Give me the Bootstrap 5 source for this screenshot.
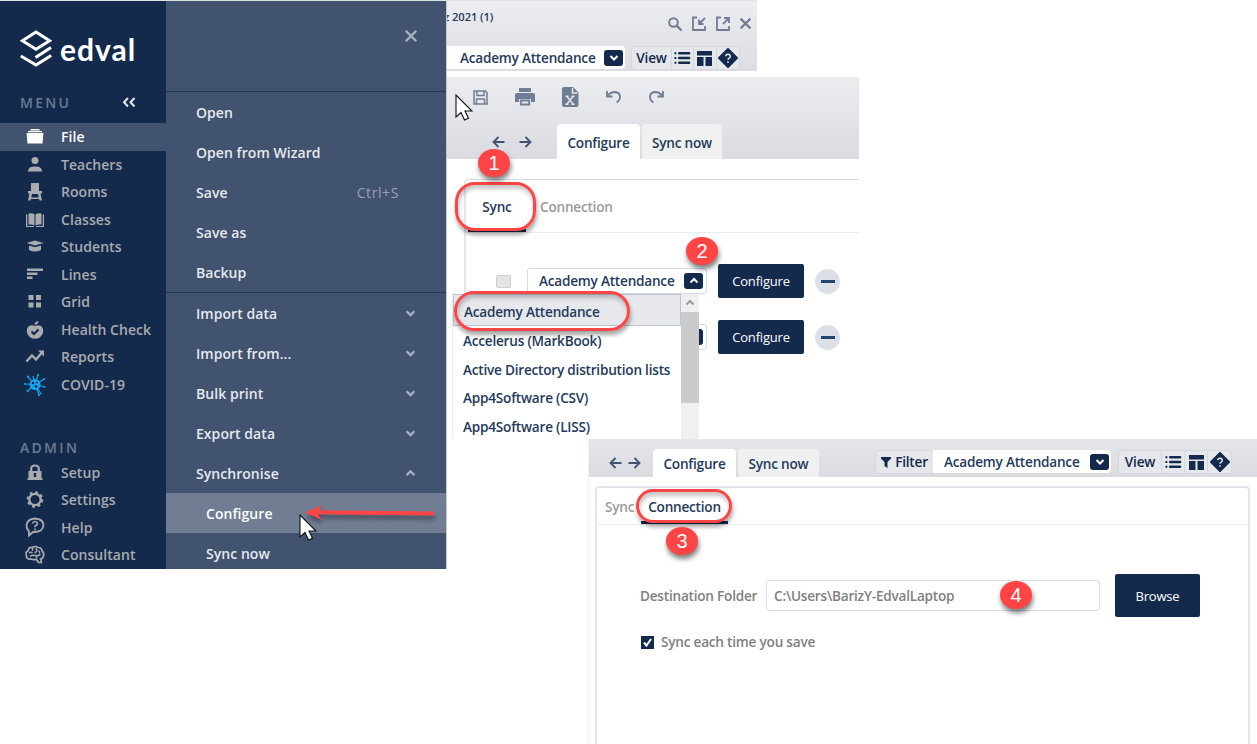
<!DOCTYPE html>
<html lang="en">
<head>
  <meta charset="UTF-8" />
  <meta name="viewport" content="width=device-width, initial-scale=1.0" />
  <title>Edval | Synchronise</title>
  <link href="https://cdn.jsdelivr.net/npm/bootstrap@5.3.0/dist/css/bootstrap.min.css" rel="stylesheet" />
  <style>
    :root { --navy: #132a4d; --ink: #243a5c; --slate: #41536e; --red: #fe4444; --line: #e4e6eb; }
    body {
      width: 1257px;
      height: 744px;
      overflow: hidden;
      background: #fff;
      color: var(--ink);
      font: 600 13.6px/20px "Open Sans", "Noto Sans", sans-serif;
      letter-spacing: -.22px;
    }
    svg { display: block; fill: currentColor; flex: none; }
    .guide { display: grid; grid-template: 439px 305px / 447px 141px 271px 398px; }
    .win-file { grid-area: 1 / 1 / 3 / 2; z-index: 1; height: 569px; width: 447px; border-top: 1px solid #dde3de; border-right: 1px solid #c9c9c9; font-size: 14px; letter-spacing: .05px; }
    .win-sync { grid-area: 1 / 2 / 2 / 4; }
    .win-conn { grid-area: 2 / 3 / 3 / 5; border-left: 1px solid #f0f0f3; }

    /* left menu */
    .side { width: 166px; background: var(--navy); color: #a9abae; }
    .brand-row { height: 92px; padding: 4px 0 0 20px; color: #fff; }
    .brand-name { font: 700 30px/32px "Lato", sans-serif; letter-spacing: 1px; margin-left: 8px; }
    .side-title { color: #6c7b92; letter-spacing: 2.3px; padding-left: 20px; height: 30px; }
    .side-title svg { margin-right: 29px; }
    .side-title.admin { height: 21px; margin-top: 40px; }
    .side a { height: 27.5px; padding: 1px 0 0 24px; color: inherit; text-decoration: none; display: flex; align-items: center; }
    .side .admin ~ a { padding-top: 0; }
    .side a svg { width: 22px; height: 22px; margin-right: 15px; }
    .side a.on { background: var(--slate); color: #fff; }
    .virus { color: #17a5ea; }

    .sub { width: 280px; background: var(--slate); color: #e6e9ee; }
    .sub-head { height: 91px; border-bottom: 1px solid #1d3558; padding: 28px 28px 0 0; color: #a9b2c0; }
    .sub-list > div { height: 40px; padding: 1px 30px 0 30px; display: flex; align-items: center; justify-content: space-between; }
    .sub-list > div svg { color: #a9b2c0; width: 11px; height: 9px; }
    .sub-list.first { height: 201px; padding-top: 1px; border-bottom: 1px solid #1d3558; }
    .sub-list.first > div { padding-top: 0; }
    .sub-list > .inner { padding-left: 40px; }
    .sub-list > .inner:last-child { height: 36px; padding-top: 5px; }
    .sub-list > .on { background: #707d93; color: #fff; }
    .keys { color: #98a3b3; font-weight: 500; padding-right: 17px; letter-spacing: .6px; }

    /* window bars */
    .bar-a { width: 310px; height: 71px; background: linear-gradient(#ecedf1, #dcdde2); border-top: 1px solid #dde3de; }
    .bar-b { height: 82px; margin-top: 6px; background: linear-gradient(#ecedf1, #dadbe1); }
    .bar-c { height: 38px; background: linear-gradient(#e5e6ea, #dadbe1); padding-left: 20px; }
    .gray { color: #6f7e94; }
    .title-row { height: 45px; }
    .doc-title { font-size: 11.2px; line-height: 16px; padding-top: 8px; margin-left: -3px; letter-spacing: -.1px; }
    .title-row .gray { gap: 8px; margin-right: 5px; }
    .pick { background: #fff; width: 178px; height: 23px; border-radius: 0 4px 4px 0; padding: 0 2px 0 13px; }
    .bar-c .pick { padding-left: 11px; margin-bottom: 4px; }
    .drop { width: 19px; height: 16px; border-radius: 3px; background: var(--navy); color: #fff; display: grid; place-items: center; }
    .drop svg { width: 10px; height: 8px; }
    .tools { height: 24px; border: 1px solid #d3d7df; border-radius: 4px; background: #e6e7eb; color: var(--navy); }
    .bar-a .tools { margin-left: 6px; }
    .bar-c .tools { margin: 0 0 3px 7px; }
    .bar-c .tools.filter { width: 58px; margin-left: 56px; border-right: 0; border-radius: 4px 0 0 4px; }
    .tools > * { width: 22.3px; height: 22px; display: grid; place-items: center; border-right: 1px solid #d3d7df; }
    .tools > .word { width: 40px; }
    .bar-c .tools > * { width: 23px; }
    .bar-c .tools > .word { width: 43px; }
    .tools > :last-child { border: 0; }
    .quick { height: 40px; padding-left: 26px; gap: 27px; }
    .arrows { color: #41536e; gap: 14px; width: 110px; padding-left: 45px; }
    .bar-c .arrows { gap: 6px; width: 44px; padding: 0 0 8px; }
    .tab { width: 80px; height: 35px; padding-top: 2px; margin-left: 2px; border-radius: 4px 4px 0 0; background: #eff1f1; display: grid; place-items: center; }
    .tab.on { width: 83px; margin-left: 0; background: #fff; }
    .bar-c .tab { width: 81px; height: 28px; }
    .bar-c .tab.on { width: 83px; }

    .sheet { border: 2px solid var(--line); border-bottom: 0; border-radius: 4px 4px 0 0; }
    .sheet-tabs { border-bottom: 1px solid #ececf0; color: #9b9b9b; }
    .sheet-tabs > * { display: flex; align-items: center; }
    .sheet-tabs .on { justify-content: center; color: var(--ink); border-bottom: 3px solid var(--navy); padding-top: 4px; }
    .sheet-list { margin: 20px 0 0 17px; height: 259px; border-width: 1px 0 0 2px; border-radius: 4px 0 0 0; border-top-color: #d9dbe2; }
    .sheet-list .sheet-tabs { height: 53px; }
    .sheet-list .on { width: 58px; height: 52px; margin-left: 2px; }
    .sheet-list .off { padding: 2px 0 0 14px; }
    .sheet-dest { margin: 9px 7px 0 6px; height: 258px; }
    .sheet-dest .sheet-tabs { height: 37px; }
    .sheet-dest .on { width: 87px; height: 36px; }
    .sheet-dest .off { width: 44px; padding: 2px 0 0 8px; }

    .btn-navy, .btn-navy:hover { width: 86px; height: 34px; padding: 2px 0 0; margin-left: 11px; border: 0; border-radius: 2px; background: var(--navy); color: #fff; font-size: 13px; font-weight: 500; letter-spacing: -.2px; }
    .sync-row { padding: 31px 0 0 30px; }
    .sync-row.second { padding: 22px 0 0 61px; }
    .combo { width: 180px; height: 26px; padding: 0 3px 0 11px; border: 1px solid #d5d9e2; border-radius: 3px; }
    .offbox + .combo { margin-left: 16px; }
    .minus { width: 25px; height: 25px; margin-left: 11px; border-radius: 50%; background: #dcdfe6; display: grid; place-items: center; }
    .minus i { width: 14px; height: 3px; background: #23446f; }
    .offbox { width: 15px; height: 13px; border: 1px solid #cfcfcf; background: #e4e4e4; border-radius: 2px; }

    .menu-list { left: 452px; top: 294px; width: 247px; height: 145px; background: #fff; border-left: 1px solid #eee; }
    .menu-list .opt { height: 28.6px; padding-left: 10px; display: flex; align-items: center; }
    .menu-list .opt.on { height: 32px; padding-top: 3px; background: #e6e8ec; border: 1px solid #b9c4d0; margin-bottom: 1px; }
    .scroll-col { width: 18px; background: #f0f0f0; }
    .scroll-col svg { color: #999; margin: 5px 4px; }
    .scroll-col i { display: block; height: 91px; background: #cbcbcb; }

    .dest-row { padding: 49px 0 0 43px; color: #808080; }
    .dest-row label { width: 126px; }
    .path-box { width: 334px; height: 31px; border: 1px solid #d9dde5; border-radius: 3px; padding-left: 7px; }
    .dest-row .btn-navy { width: 85px; height: 43px; margin-left: 15px; }
    .auto-row { padding: 15px 0 0 44px; gap: 7px; color: #808080; }

    /* call-outs */
    .ring { position: absolute; border: 3px solid var(--red); border-radius: 20px; box-shadow: 1px 4px 4px rgba(0,0,0,.35), inset 1px 4px 4px rgba(0,0,0,.22); z-index: 2; }
    .ring-1 { left: 455px; top: 182px; width: 81px; height: 49px; }
    .ring-2 { left: 454px; top: 291px; width: 176px; height: 40px; }
    .ring-3 { left: 636px; top: 489px; width: 96px; height: 34px; }
    .num { position: absolute; width: 32px; height: 28px; border-radius: 50%; background: var(--red); color: #fff; box-shadow: 1px 4px 5px rgba(0,0,0,.5); font: 20px/28px "Liberation Sans", sans-serif; text-align: center; z-index: 2; }
    .num-1 { left: 478px; top: 149px; }
    .num-2 { left: 686px; top: 237px; }
    .num-3 { left: 666px; top: 527px; }
    .num-4 { left: 1000px; top: 581px; }
    .over { position: absolute; overflow: visible; z-index: 3; }
    .arrow-red { left: 305px; top: 503px; filter: drop-shadow(1px 4px 2px rgba(0,0,0,.4)); }
    .ptr-1 { left: 299px; top: 514px; }
    .ptr-2 { left: 455px; top: 94px; }
  </style>
</head>
<body>
  <svg width="0" height="0" class="position-absolute">
    <symbol id="chev" viewBox="0 0 10 8"><path d="M1.500 2 5 5.500 8.500 2" fill="none" stroke="currentColor" stroke-width="2"/></symbol>
    <symbol id="chev-up" viewBox="0 0 10 8"><path d="M1.500 5.500 5 2 8.500 5.500" fill="none" stroke="currentColor" stroke-width="2"/></symbol>
    <symbol id="cross" viewBox="0 0 12 12"><path d="M1.500 1.500 10.500 10.500M10.500 1.500 1.500 10.500" fill="none" stroke="currentColor" stroke-width="2"/></symbol>
    <symbol id="list" viewBox="0 0 18 14"><path d="M5.500 2H16M5.500 7H16M5.500 12H16" stroke="currentColor" stroke-width="2.600" stroke-linecap="round"/><path d="M.5 1h2v2h-2zM.5 6h2v2h-2zM.5 11h2v2h-2z"/></symbol>
    <symbol id="table" viewBox="0 0 15 15"><path d="M0 0h15v4.500H0zM0 6h6.500v9H0zM8.500 6H15v9H8.500z"/></symbol>
    <symbol id="ask" viewBox="0 0 20 20"><path d="M10 1 19 10 10 19 1 10z" stroke="currentColor" stroke-width="2" stroke-linejoin="round"/><path d="M7.700 8.200a2.300 2.100 0 1 1 3.500 1.900q-1.200.6-1.200 1.700M10 13.200v1.600" fill="none" stroke="#e6e7eb" stroke-width="1.500"/></symbol>
    <symbol id="left" viewBox="0 0 13 12"><path d="M12.500 6H1.500M6.500 1 1.500 6l5 5" fill="none" stroke="currentColor" stroke-width="1.800"/></symbol>
    <symbol id="right" viewBox="0 0 13 12"><path d="M.5 6h11M6.500 1l5 5-5 5" fill="none" stroke="currentColor" stroke-width="1.800"/></symbol>
    <symbol id="pointer" viewBox="0 0 18 27"><path d="M1 1v22l5-4.500 3.500 7.500 4-1.800L10 17h7z" fill="#fff" stroke="#111" stroke-width="1.100"/></symbol>
  </svg>

  <div class="guide position-relative">
    <!-- File menu -->
    <section class="win-file d-flex">
      <nav class="side">
        <div class="brand-row d-flex align-items-center">
          <svg width="32" height="38" viewBox="0 0 32 38"><path d="M16 2 29.600 10.700 16 19.300 2.400 10.700zM31 17.500 15.500 27.500M.8 26 16 35 31.200 25.500" fill="none" stroke="#fff" stroke-width="3"/></svg>
          <span class="brand-name">edval</span>
        </div>
        <div class="side-title d-flex"><span>MENU</span>
          <svg class="ms-auto" width="15" height="20" viewBox="0 0 15 20"><path d="M6 5 2 9.200 6 13.500M12.500 5l-4 4.200 4 4.300" fill="none" stroke="#e4e7ec" stroke-width="2"/></svg>
        </div>
        <a class="on" href="#"><svg viewBox="0 0 22 22"><path d="M7 3h8l1 1.500H6zM4 5h14v1.200H4zM2.500 7h17L18.500 17.500h-15z"/></svg>File</a>
        <a href="#"><svg viewBox="0 0 22 22"><circle cx="11" cy="6.500" r="3.500"/><path d="M4 17.500c0-4 3-5 7-5s7 1 7 5z"/></svg>Teachers</a>
        <a href="#"><svg viewBox="0 0 22 22"><path d="M7 2h8v8h3v2.500h-1.500l1.500 7h-2.500L15 18H7l-.5 1.500H4l1.500-7H4V10h3zM8 13l-.7 3.500h7.400L14 13z"/></svg>Rooms</a>
        <a href="#"><svg viewBox="0 0 22 22"><path d="M4.500 4.500q4-1 6 1v11q-2-1.500-6-1zM11.500 5.500q2-2 6-1v11q-4-.5-6 1zM2 5.500h1.300V17H10v1H2zM20 5.500h-1.300V17H12v1h8z"/></svg>Classes</a>
        <a href="#"><svg viewBox="0 0 22 22"><path d="M2.500 7 11 4.500 19.500 7 11 9.500zM5 9.500l6 1.800 6-1.800v4.500q-6 3-12 0z"/></svg>Students</a>
        <a href="#"><svg viewBox="0 0 22 22"><path d="M3 4.500h16v2.400H3zM3 8.500h10.500v2.400H3zM3 12.500h5.500v2.400H3z"/></svg>Lines</a>
        <a href="#"><svg viewBox="0 0 22 22"><path d="M4.500 4h5v5h-5zM12 4h5v5h-5zM4.500 11.500h5v5h-5zM12 11.500h5v5h-5z"/></svg>Grid</a>
        <a href="#"><svg viewBox="0 0 22 22"><path d="M10.500 6Q10.500 2.500 14.500 2 14.500 5.500 10.500 6zM11 7q3-1.500 6 0 3.500 3 1.500 8-3 5.500-7.500 4.500-4.500 1-7.500-4.500Q1.500 10 5 7q3-1.500 6 0z"/><path d="m7.500 12.500 2.500 2.500 4.500-4.500" fill="none" stroke="#132a4d" stroke-width="2"/></svg>Health Check</a>
        <a href="#"><svg viewBox="0 0 22 22"><path d="m2.500 15.500 5.500-6 4 4 6-7" fill="none" stroke="currentColor" stroke-width="2.400"/><path d="M14 4.500h6v6z"/></svg>Reports</a>
        <a href="#"><svg class="virus" viewBox="0 0 22 22"><circle cx="11" cy="10.500" r="5.500"/><path d="M11 10.500 4 3M11 10.500 14 .8M11 10.500 20.500 5M11 10.500 20.500 13M11 10.500 16.500 19M11 10.500 15 21M11 10.500 3.500 17M11 10.500 1.500 10M11 10.500 9 2" stroke="currentColor" stroke-width="1.200"/><path d="M3 2.500h2M13 1h2M20 4v2M20.500 12v2M15.500 19.500h2M14 21.500h2M2.500 16.500l2 1.500M1 9v2" stroke="currentColor" stroke-width="1.500"/><g fill="#132a4d"><circle cx="9" cy="9" r="1.300"/><circle cx="13" cy="8.500" r="1"/><circle cx="12" cy="12.500" r="1.300"/></g></svg>COVID-19</a>
        <div class="side-title admin">ADMIN</div>
        <a href="#"><svg viewBox="0 0 22 22"><path d="M3.500 16h15V18h-15zM4.500 9h13v7h-13z"/><path d="M7.200 9.500V7q0-3.500 3.800-3.500T14.800 7v2.500" fill="none" stroke="currentColor" stroke-width="2.200"/><path d="M9.800 11h2.400v4H9.800z" fill="#132a4d"/></svg>Setup</a>
        <a href="#"><svg viewBox="0 0 22 22"><circle cx="11" cy="10.500" r="5.700" fill="none" stroke="currentColor" stroke-width="2.300"/><circle cx="11" cy="10.500" r="7.300" fill="none" stroke="currentColor" stroke-width="2" stroke-dasharray="2.860 2.870"/></svg>Settings</a>
        <a href="#"><svg viewBox="0 0 22 22"><path d="M5 18.500v-4Q2.500 12 2.500 8.500 3 2 11 1.500q8 .5 8.500 6.500-.5 6.500-8.500 7H9z" fill="none" stroke="currentColor" stroke-width="1.800"/><path d="M8.500 6.500q.5-2 2.500-2t2.500 2q0 1.500-2.500 2.700v1.100M11 11.500v1.700" fill="none" stroke="currentColor" stroke-width="1.700"/></svg>Help</a>
        <a href="#"><svg viewBox="0 0 22 22"><path d="M7 15q-5 .5-4.500-3.500Q1 8 4 7 4.500 3 8.500 3.500 11 1.500 14 3.500q4 0 4 3.500 2.500 2 1.500 5-.5 2.500-3 3l1 3.500h-3l-2-3q-3.500.5-5.500-.5z" fill="none" stroke="currentColor" stroke-width="1.700"/><path d="M5 9q2-1.500 3.500 0M8.500 4v3M11.500 4.500q2 1 1 3l-2 1.500M6 12.500q1.500-2 4-1h3M14.500 6.500q1.500 1 1 3M13 12l3.500-1.500M12.500 14.500v-2" fill="none" stroke="currentColor" stroke-width="1.400"/></svg>Consultant</a>
      </nav>
      <div class="sub">
        <div class="sub-head d-flex justify-content-end"><svg width="14" height="14"><use href="#cross"/></svg></div>
        <div class="sub-list first">
          <div>Open</div>
          <div>Open from Wizard</div>
          <div>Save<span class="keys">Ctrl+S</span></div>
          <div>Save as</div>
          <div>Backup</div>
        </div>
        <div class="sub-list">
          <div>Import data<svg><use href="#chev"/></svg></div>
          <div>Import from...<svg><use href="#chev"/></svg></div>
          <div>Bulk print<svg><use href="#chev"/></svg></div>
          <div>Export data<svg><use href="#chev"/></svg></div>
          <div>Synchronise<svg><use href="#chev-up"/></svg></div>
          <div class="inner on">Configure</div>
          <div class="inner">Sync now</div>
        </div>
      </div>
    </section>

    <!-- Sync tab -->
    <section class="win-sync">
      <div class="bar-a">
        <div class="title-row d-flex">
          <span class="doc-title text-nowrap">z 2021 (1)</span>
          <div class="gray d-flex ms-auto align-items-center">
            <svg width="16" height="16" viewBox="0 0 16 16"><circle cx="6.500" cy="6.500" r="4.300" fill="none" stroke="currentColor" stroke-width="2"/><path d="m9.500 9.500 5 5" stroke="currentColor" stroke-width="2.400"/></svg>
            <svg width="16" height="16" viewBox="0 0 16 16"><path d="M6 1.500H2v12.500h12V10M14 2 8.500 7.500M8 3.500V8h4.500" fill="none" stroke="currentColor" stroke-width="1.800"/></svg>
            <svg width="16" height="16" viewBox="0 0 16 16"><path d="M6 1.500H2v12.500h12V10M8 8l5.500-5.500M9 2h5v5" fill="none" stroke="currentColor" stroke-width="1.800"/></svg>
            <svg width="13" height="13"><use href="#cross"/></svg>
          </div>
        </div>
        <div class="d-flex">
          <div class="pick d-flex align-items-center justify-content-between">Academy Attendance<span class="drop"><svg><use href="#chev"/></svg></span></div>
          <div class="tools d-flex">
            <span class="word">View</span>
            <span><svg width="17" height="14"><use href="#list"/></svg></span>
            <span><svg width="15" height="15"><use href="#table"/></svg></span>
            <span><svg width="20" height="20"><use href="#ask"/></svg></span>
          </div>
        </div>
      </div>
      <div class="bar-b d-flex flex-column justify-content-between">
        <div class="quick gray d-flex align-items-center">
          <svg width="15" height="15" viewBox="0 0 15 15"><path d="M1 1h11.500L14 2.500V14H1zM4 1v4.500h7V1M3.500 14V9h8v5" fill="none" stroke="currentColor" stroke-width="1.500"/></svg>
          <svg width="20" height="18" viewBox="0 0 20 18"><path d="M4 0h12v4H4zM2 5h16q2 0 2 2v7h-4v-3H4v3H0V7q0-2 2-2z"/><path d="M5.800 12.500h8.400v4H5.800z" fill="none" stroke="currentColor" stroke-width="1.800"/></svg>
          <svg width="17" height="20" viewBox="0 0 17 20"><path d="M2 0h9l5.500 5.500V18q0 2-2 2H2q-2 0-2-2V2Q0 0 2 0z"/><path d="M10.500 1v5h5M5 9.500l6 7.500M11 9.500 5 17M3.500 9.300h3M9.500 9.300h3M3.500 17.200h3M9.500 17.200h3" fill="none" stroke="#e8e9ed" stroke-width="1.400"/></svg>
          <svg width="16" height="14" viewBox="0 0 16 14"><path d="M1 1v5.500h5.500M1.500 6q3-4 7.500-4 5 .5 5 5 0 3.500-3.500 5.500" fill="none" stroke="currentColor" stroke-width="1.800"/></svg>
          <svg width="16" height="14" viewBox="0 0 16 14"><path d="M14 1v5.500H8.500M13.500 6q-3-4-7.500-4-5 .5-5 5 0 3.500 3.500 5.500" fill="none" stroke="currentColor" stroke-width="1.800"/></svg>
        </div>
        <div class="d-flex">
          <div class="arrows d-flex align-items-center"><svg width="13" height="12"><use href="#left"/></svg><svg width="13" height="12"><use href="#right"/></svg></div>
          <div class="tab on">Configure</div>
          <div class="tab">Sync now</div>
        </div>
      </div>
      <div class="sheet sheet-list">
        <div class="sheet-tabs d-flex">
          <div class="on">Sync</div>
          <div class="off">Connection</div>
        </div>
        <div class="sync-row d-flex align-items-center">
          <span class="offbox"></span>
          <div class="combo d-flex align-items-center justify-content-between">Academy Attendance<span class="drop"><svg><use href="#chev-up"/></svg></span></div>
          <button class="btn btn-navy">Configure</button>
          <span class="minus"><i></i></span>
        </div>
        <div class="sync-row second d-flex align-items-center">
          <div class="combo d-flex align-items-center justify-content-end"><span class="drop"></span></div>
          <button class="btn btn-navy">Configure</button>
          <span class="minus"><i></i></span>
        </div>
      </div>
    </section>

    <!-- Connection tab -->
    <section class="win-conn">
      <div class="bar-c d-flex align-items-end">
        <div class="arrows d-flex"><svg width="13" height="12"><use href="#left"/></svg><svg width="13" height="12"><use href="#right"/></svg></div>
        <div class="tab on">Configure</div>
        <div class="tab">Sync now</div>
        <div class="tools filter"><span class="w-100 d-flex align-items-center justify-content-center gap-1"><svg width="10" height="11" viewBox="0 0 10 11"><path d="M0 0h10v1.500L6.500 5v6L3.500 9V5L0 1.500z"/></svg>Filter</span></div>
        <div class="pick d-flex align-items-center justify-content-between">Academy Attendance<span class="drop"><svg><use href="#chev"/></svg></span></div>
        <div class="tools d-flex">
          <span class="word">View</span>
          <span><svg width="17" height="14"><use href="#list"/></svg></span>
          <span><svg width="15" height="15"><use href="#table"/></svg></span>
          <span><svg width="20" height="20"><use href="#ask"/></svg></span>
        </div>
      </div>
      <div class="sheet sheet-dest">
        <div class="sheet-tabs d-flex">
          <div class="off">Sync</div>
          <div class="on">Connection</div>
        </div>
        <div class="dest-row d-flex align-items-center">
          <label>Destination Folder</label>
          <div class="path-box d-flex align-items-center">C:\Users\BarizY-EdvalLaptop</div>
          <button class="btn btn-navy">Browse</button>
        </div>
        <div class="auto-row d-flex align-items-center">
          <svg width="13" height="13" viewBox="0 0 13 13"><path d="M0 0h13v13H0z" fill="#132a4d"/><path d="m3 6.500 2.500 3L10 3" fill="none" stroke="#fff" stroke-width="2"/></svg>
          <span>Sync each time you save</span>
        </div>
      </div>
    </section>

    <div class="menu-list position-absolute d-flex">
      <div class="flex-grow-1 text-nowrap">
        <div class="opt on">Academy Attendance</div>
        <div class="opt">Accelerus (MarkBook)</div>
        <div class="opt">Active Directory distribution lists</div>
        <div class="opt">App4Software (CSV)</div>
        <div class="opt">App4Software (LISS)</div>
      </div>
      <div class="scroll-col"><svg width="10" height="8"><use href="#chev-up"/></svg><i></i></div>
    </div>

    <div class="ring ring-1"></div>
    <div class="ring ring-2"></div>
    <div class="ring ring-3"></div>
    <div class="num num-1">1</div>
    <div class="num num-2">2</div>
    <div class="num num-3">3</div>
    <div class="num num-4">4</div>
    <svg class="over arrow-red" width="130" height="20" viewBox="0 0 130 20"><path d="M8 9.200 129 10.500" stroke="#fe4444" stroke-width="4"/><path d="M0 9.500 17 2 12 9.500 17 17z" fill="#fe4444"/></svg>
    <svg class="over ptr-1" width="18" height="27"><use href="#pointer"/></svg>
    <svg class="over ptr-2" width="18" height="27"><use href="#pointer"/></svg>
  </div>

  <script src="https://cdn.jsdelivr.net/npm/bootstrap@5.3.0/dist/js/bootstrap.bundle.min.js"></script>
</body>
</html>
